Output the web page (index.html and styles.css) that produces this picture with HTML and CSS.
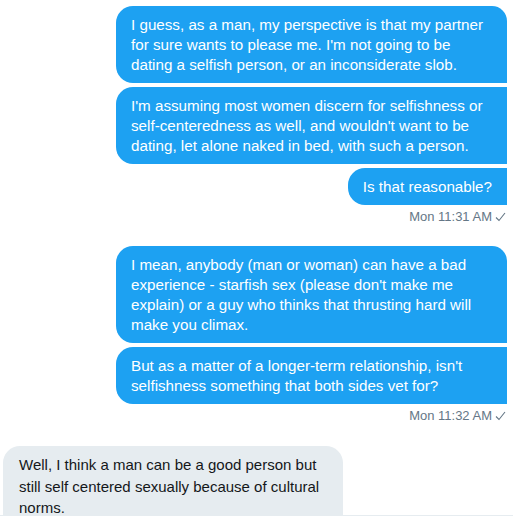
FILE: index.html
```html
<!DOCTYPE html>
<html lang="en">
<head>
<meta charset="utf-8">
<title>Messages</title>
<link rel="stylesheet" href="styles.css">
</head>
<body>
<div class="thread">
  <div class="group sent">
    <div class="bubble">I guess, as a man, my perspective is that my partner for sure wants to please me. I'm not going to be dating a selfish person, or an inconsiderate slob.</div>
    <div class="bubble">I'm assuming most women discern for selfishness or self-centeredness as well, and wouldn't want to be dating, let alone naked in bed, with such a person.</div>
    <div class="bubble">Is that reasonable?</div>
    <div class="meta">Mon 11:31 AM <svg class="check" width="11" height="10" viewBox="0 0 11 10"><path d="M1 5.5 L4 8.5 L10 1" fill="none" stroke="#657786" stroke-width="1.1"/></svg></div>
  </div>
  <div class="group sent">
    <div class="bubble">I mean, anybody (man or woman) can have a bad experience - starfish sex (please don't make me explain) or a guy who thinks that thrusting hard will make you climax.</div>
    <div class="bubble">But as a matter of a longer-term relationship, isn't selfishness something that both sides vet for?</div>
    <div class="meta">Mon 11:32 AM <svg class="check" width="11" height="10" viewBox="0 0 11 10"><path d="M1 5.5 L4 8.5 L10 1" fill="none" stroke="#657786" stroke-width="1.1"/></svg></div>
  </div>
  <div class="group received">
    <div class="bubble">Well, I think a man can be a good person but still self centered sexually because of cultural norms.</div>
  </div>
</div>
<div class="composer"></div>
</body>
</html>
```
FILE: styles.css
```css
html, body {
  margin: 0;
  padding: 0;
  background: #ffffff;
}
.thread {
  height: 516px;
  overflow: hidden;
  border-bottom: 1px solid #e6ecf0;
  box-sizing: border-box;
  padding: 6px 6px 0 3px;
  display: flex;
  flex-direction: column;
}
.group {
  display: flex;
  flex-direction: column;
  gap: 4px;
}
.group.sent {
  align-items: flex-end;
  margin-bottom: 21px;
}
.group.received {
  align-items: flex-start;
  margin-top: 1px;
}
.bubble {
  max-width: 391px;
  box-sizing: border-box;
  padding: 9px 15px 8px 15px;
  font-size: 15.2px;
  line-height: 20px;
  border-radius: 17px;
}
.sent .bubble {
  background: #1da1f2;
  color: #ffffff;
  font-family: "Liberation Sans", Arial, sans-serif;
  border-top-right-radius: 0;
  border-bottom-right-radius: 0;
}
.sent .bubble:first-child {
  border-top-right-radius: 15px;
}
.received .bubble {
  background: #e6ecf0;
  color: #14171a;
  font-family: "Liberation Sans", Arial, sans-serif;
  font-size: 15px;
  line-height: 21.5px;
  padding: 8px 16px 12px 16px;
  width: 340px;
}
.meta {
  font-family: "Liberation Sans", Arial, sans-serif;
  font-size: 13px;
  line-height: 16px;
  color: #657786;
  display: flex;
  align-items: center;
  gap: 3px;
  padding-right: 1px;
}
.check {
  display: block;
}
.composer {
  height: 6px;
  background: #ffffff;
}
```
